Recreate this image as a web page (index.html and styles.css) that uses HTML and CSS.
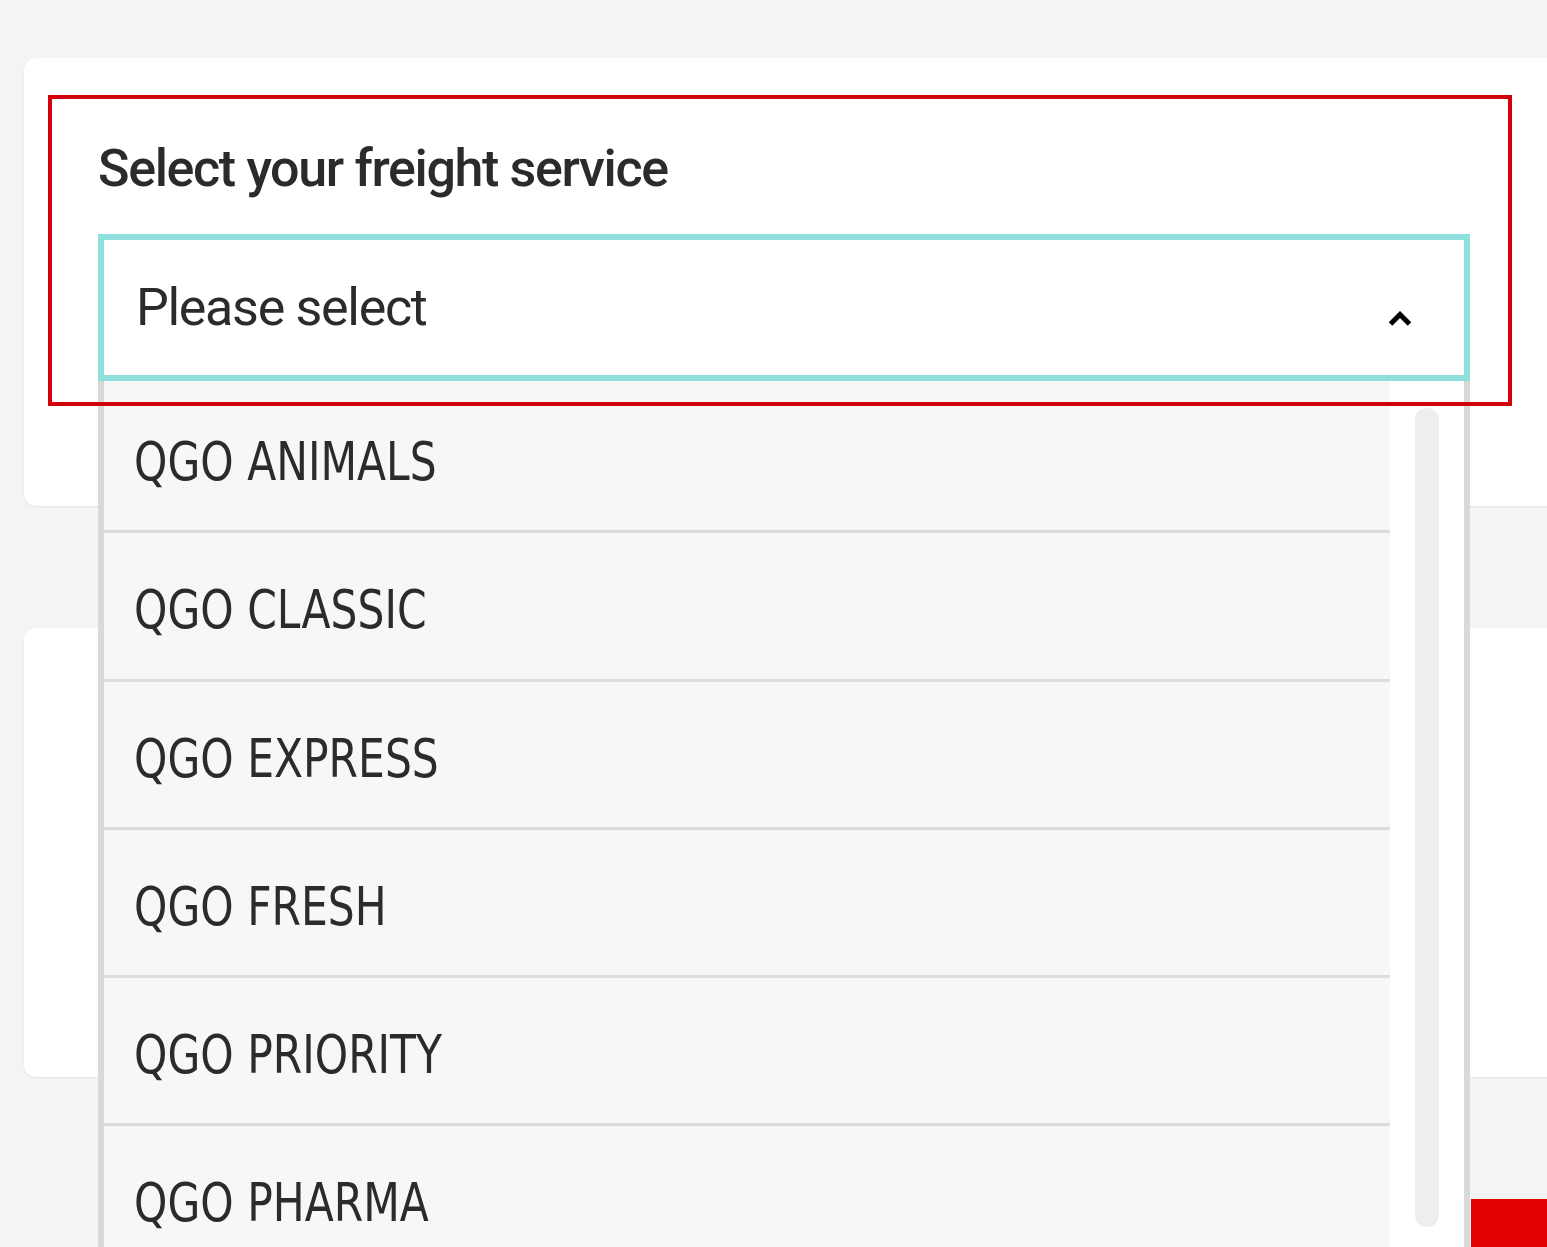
FILE: index.html
```html
<!DOCTYPE html>
<html lang="en">
<head>
<meta charset="utf-8">
<title>Select your freight service</title>
<link rel="stylesheet" href="styles.css">
</head>
<body>
<main class="page">
  <section class="card card-service">
    <div class="field">
      <label class="field-label">Select your freight service</label>
      <div class="select">
        <div class="select-box">
          <span class="select-placeholder">Please select</span>
          <svg class="chevron" width="26" height="16" viewBox="0 0 26 16" aria-hidden="true">
            <path d="M3.5 13 L13 3.5 L22.5 13" fill="none" stroke="#000" stroke-width="5" stroke-linejoin="miter"/>
          </svg>
        </div>
        <div class="dropdown">
          <ul class="options">
            <li class="option"><span class="option-text">QGO ANIMALS</span></li>
            <li class="option"><span class="option-text">QGO CLASSIC</span></li>
            <li class="option"><span class="option-text">QGO EXPRESS</span></li>
            <li class="option"><span class="option-text">QGO FRESH</span></li>
            <li class="option"><span class="option-text">QGO PRIORITY</span></li>
            <li class="option"><span class="option-text">QGO PHARMA</span></li>
          </ul>
          <div class="scroll-track"><div class="scroll-thumb"></div></div>
        </div>
      </div>
    </div>
  </section>
  <section class="card card-second"></section>
  <div class="actions"><button class="btn-primary" type="button"></button></div>
</main>
</body>
</html>
```

FILE: styles.css
```css
html, body {
  margin: 0;
  padding: 0;
}
body {
  background: #f3f4f6;
  overflow: hidden;
  height: 1247px;
  font-family: Roboto, "Noto Sans", sans-serif;
  color: #2e2e2e;
}
.page {
  padding: 58px 0 0 24px;
}
.card {
  background: #ffffff;
  border-radius: 12px 0 0 12px;
  margin-right: -20px;
  box-shadow: 0 1px 2px rgba(0, 0, 0, 0.08);
  box-sizing: border-box;
}
.card-service {
  height: 448px;
  padding: 37px 0 0 24px;
}
.card-second {
  height: 449px;
  margin-top: 122px;
}
.field {
  position: relative;
  width: 1464px;
  height: 311px;
  box-sizing: border-box;
  padding: 44px 0 0 50px;
}
.field::after {
  content: "";
  position: absolute;
  inset: 0;
  border: 4px solid #d2000b;
  z-index: 5;
  pointer-events: none;
}
.field-label {
  display: block;
  font-family: Roboto, sans-serif;
  font-weight: 500;
  font-size: 52px;
  line-height: 60px;
  letter-spacing: -1.35px;
  color: #2b2b2b;
}
.select {
  position: relative;
  margin-top: 35px;
  width: 1372px;
}
.select-box {
  height: 147px;
  box-sizing: border-box;
  border: 6px solid #8fe0dc;
  background: #fff;
  display: flex;
  align-items: center;
  justify-content: space-between;
  padding: 0 51px 0 32px;
}
.select-placeholder {
  font-family: Roboto, sans-serif;
  font-size: 52px;
  line-height: 60px;
  letter-spacing: -1.3px;
  color: #2b2b2b;
}
.chevron {
  display: block;
  margin-top: 23px;
}
.dropdown {
  position: absolute;
  top: 100%;
  left: 0;
  width: 1372px;
  height: 900px;
  box-sizing: border-box;
  border-left: 6px solid #d9d9d9;
  border-right: 6px solid #d9d9d9;
  display: grid;
  grid-template-columns: 1fr 74px;
  background: #fff;
  z-index: 2;
}
.options {
  list-style: none;
  margin: 0;
  padding: 4px 0 0 0;
  background: #f7f7f7;
}
.option {
  height: 148.25px;
  box-sizing: border-box;
  padding: 50px 0 0 30px;
  border-bottom: 3px solid #dcdcdc;
  font-family: "Liberation Sans Narrow", "DejaVu Sans Condensed", sans-serif;
  font-size: 53px;
  line-height: 53px;
  color: #2b2b2b;
}
.option-text {
  display: inline-block;
  transform: scaleX(0.89);
  transform-origin: left center;
}
.scroll-track {
  background: #fff;
  padding: 27px 0 0 25px;
}
.scroll-thumb {
  width: 24px;
  height: 819px;
  border-radius: 12px;
  background: #eeeeee;
}
.actions {
  display: flex;
  justify-content: flex-end;
  margin-top: 122px;
  margin-right: -30px;
}
.btn-primary {
  width: 106px;
  height: 70px;
  border: 0;
  padding: 0;
  background: #e30000;
}
```
